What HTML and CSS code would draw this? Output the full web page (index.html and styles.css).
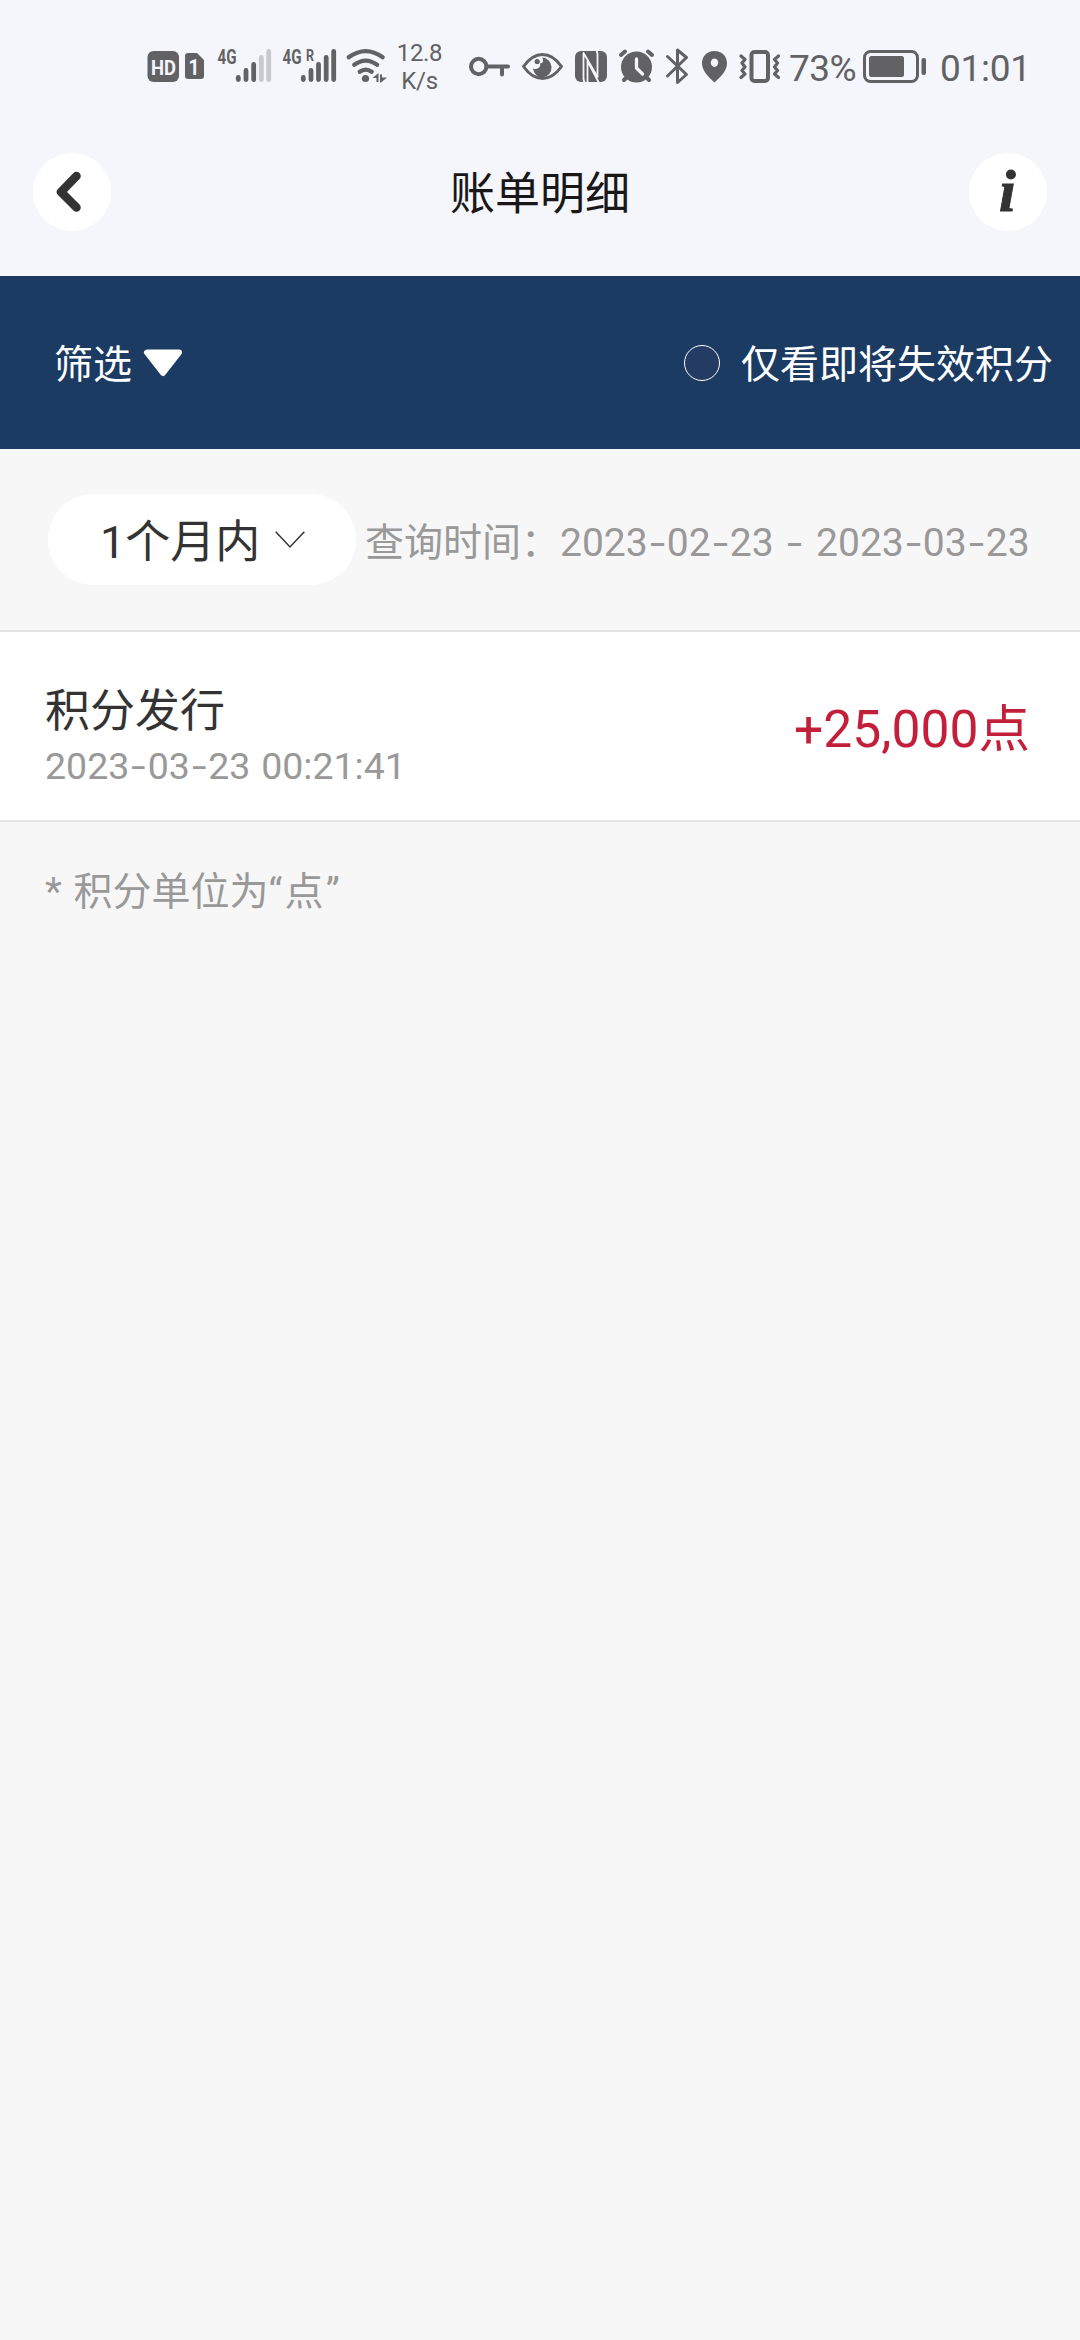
FILE: index.html
```html
<!DOCTYPE html>
<html lang="zh-CN">
<head>
<meta charset="utf-8">
<title>账单明细</title>
<link rel="stylesheet" href="styles.css">
</head>
<body>
<div class="status">
  <svg class="icon" width="66" height="48" viewBox="144 42 66 48">
    <rect x="147.5" y="51" width="31.5" height="31" rx="6"/>
    <text class="badge-text" x="151" y="74.5" font-size="21" textLength="25" lengthAdjust="spacingAndGlyphs">HD</text>
    <path d="M188 53h9l7 7v16q0 3-3 3h-13q-3 0-3-3V56q0-3 3-3z"/>
    <text class="badge-text" x="188.5" y="75" font-size="22" textLength="11" lengthAdjust="spacingAndGlyphs">1</text>
  </svg>
  <svg class="icon" width="66" height="48" viewBox="210 42 66 48">
    <text class="net" x="217.500" y="64" textLength="19" lengthAdjust="spacingAndGlyphs">4G</text>
    <g class="bars"><path d="M238.300 77.500v2M246 70.500v9M253.700 64.500v15"/><path class="faint" d="M261.300 57.500v22M268.700 51.500v28"/></g>
  </svg>
  <svg class="icon" width="66" height="48" viewBox="276 42 66 48">
    <text class="net" x="282.500" y="64" textLength="19" lengthAdjust="spacingAndGlyphs">4G</text>
    <text class="net net-r" x="306" y="61" textLength="8" lengthAdjust="spacingAndGlyphs">R</text>
    <g class="bars"><path d="M303.300 77.500v2M311 70.500v9M318.500 64.500v15M326.200 57.500v22M333.700 51.500v28"/></g>
  </svg>
  <svg class="icon" width="50" height="48" viewBox="342 42 50 48">
    <g class="line" stroke-width="4.200"><path d="M348.700 57.300q17-12.500 34 0M354.200 64.800q11.500-8.500 23 0M359.700 71.800q6-4.500 12 0"/></g>
    <circle cx="365.500" cy="78.500" r="3.600"/>
    <path d="M372.500 78l6-5v9h-2v-4zM380 74.500h2v3h5l-6 5h-1z"/>
  </svg>
  <div class="speed"><span>12.8</span><span>K/s</span></div>
  <svg class="icon" width="56" height="48" viewBox="460 42 56 48">
    <g class="line" stroke-width="4"><circle cx="478.700" cy="66.500" r="7.700"/><path d="M487 66.500h21M502 67v7.500"/></g>
  </svg>
  <svg class="icon" width="53" height="48" viewBox="516 42 53 48">
    <path class="line" stroke-width="3" d="M523.500 66.500Q532 54.500 542.500 54.500T561.500 66.500Q553 78.500 542.500 78.500T523.500 66.500z"/>
    <path d="M542 57.500a9.300 10 0 1 1-9 11q3 1.500 6-1q2-2 1-4q3 0 3-3q0-2-1-3z"/><circle cx="537.200" cy="61.500" r="2.600"/>
  </svg>
  <svg class="icon" width="44" height="48" viewBox="569 42 44 48">
    <rect x="575" y="51" width="32" height="31" rx="6"/>
    <path class="cut" stroke-width="1.800" d="M584.500 83l-1-4V53l14 24V61M587.500 83V61l11 21M597.500 62V54l-1-4"/>
  </svg>
  <svg class="icon" width="46" height="48" viewBox="613 42 46 48">
    <circle cx="636.500" cy="67" r="15.500"/>
    <g class="line" stroke-width="4"><path d="M621 55l4-3.500M652 55l-4-3.500M624 80l3-3M649 80l-3-3"/></g>
    <path class="cut" stroke-width="3.300" d="M636.500 59v9l6 6"/>
  </svg>
  <svg class="icon" width="36" height="48" viewBox="659 42 36 48">
    <path class="line" stroke-width="3" d="M667.500 56.500l19 18-9 8V50l9 7.500-19 18.500"/>
  </svg>
  <svg class="icon" width="38" height="48" viewBox="695 42 38 48">
    <path fill-rule="evenodd" d="M714.500 51c7.500 0 12.500 5 12.500 12.500 0 7-6 13-12.500 19-6.500-6-12.500-12-12.500-19C702 56 707 51 714.500 51zm0 7.500a3.700 4.200 0 1 0 .01 0z"/>
  </svg>
  <svg class="icon" width="53" height="48" viewBox="733 42 53 48">
    <rect class="line" stroke-width="4" x="751.500" y="52" width="16.500" height="29" rx="3"/>
    <path class="line" stroke-width="3.200" d="M741 56l4 3.500-3 3.500 3 4-3 3.500 3 3.500-4 3.500M778.500 56l-4 3.500 3 3.500-3 4 3 3.500-3 3.500 4 3.500"/>
  </svg>
  <span class="percent">73%</span>
  <svg class="icon" width="78" height="48" viewBox="858 42 78 48">
    <rect class="line" stroke-width="3" x="864.500" y="51.500" width="53" height="30" rx="6"/>
    <rect x="869" y="56" width="35" height="21" rx="2.500"/><rect x="921.500" y="58" width="4.500" height="17" rx="2"/>
  </svg>
  <span class="clock">01:01</span>
</div>
<header class="header">
  <button class="round" aria-label="返回"><svg width="78" height="78" viewBox="0 0 78 78"><path class="back" d="M43.500 23L28 39l15.500 15.500"/></svg></button>
  <h1 class="title">账单明细</h1>
  <button class="round" aria-label="说明"><svg width="78" height="78" viewBox="0 0 78 78"><text class="info" x="30" y="58">i</text></svg></button>
</header>
<div class="filter">
  <div class="filter-left"><span class="filter-text">筛选</span><svg width="40" height="28" viewBox="0 0 40 28"><path class="triangle" d="M4 3.500h32L20 24z"/></svg></div>
  <label class="filter-right"><span class="radio"></span><span class="filter-text">仅看即将失效积分</span></label>
</div>
<div class="query">
  <div class="range"><span class="range-text">1个月内</span><svg width="30" height="18" viewBox="0 0 30 18"><path class="chevron" d="M.7.700L15 16 29.300.700"/></svg></div>
  <div class="period">查询时间：<span class="dates">2023<i>-</i>02<i>-</i>23 <i>-</i> 2023<i>-</i>03<i>-</i>23</span></div>
</div>
<div class="record">
  <div class="record-main"><div class="name">积分发行</div><div class="time">2023<i>-</i>03<i>-</i>23 00:21:41</div></div>
  <div class="amount">+25,000点</div>
</div>
<p class="note">* 积分单位为<span class="quoted">“点”</span></p>
</body>
</html>
```
FILE: styles.css
```css
* { box-sizing: border-box; }
body {
  margin: 0;
  width: 1080px;
  min-height: 2340px;
  background: #f7f7f7;
  color: #333;
  font-family: Roboto, "Noto Sans CJK SC", sans-serif;
  font-size: 39px;
  line-height: 1;
  white-space: nowrap;
}
i { font-style: normal; display: inline-block; width: .49em; text-align: center; transform: scaleX(1.4); }

.status { display: flex; height: 132px; padding: 42px 0 0 144px; background: #f4f6fb; color: #626264; }
.icon { flex: none; fill: #626264; }
.line { fill: none; stroke: #626264; stroke-linecap: round; stroke-linejoin: round; }
.cut { fill: none; stroke: #f4f6fb; stroke-linejoin: round; stroke-linecap: round; }
.badge-text { fill: #f4f6fb; font-weight: 700; }
.net { font-size: 20px; font-weight: 700; }
.net-r { font-size: 16px; }
.bars { fill: none; stroke: #626264; stroke-width: 4.8px; stroke-linecap: round; }
.faint { stroke: #c8c9cd; }
.speed { width: 68px; padding-right: 13px; display: flex; flex-direction: column; align-items: center; font-size: 24px; line-height: 28px; margin-top: -3px; letter-spacing: -.3px; }
.percent { width: 72px; padding-left: 3px; font-size: 37px; line-height: 54px; letter-spacing: -.5px; }
.clock { padding-left: 4px; font-size: 37px; line-height: 54px; letter-spacing: -.3px; }

.header { display: flex; justify-content: space-between; height: 144px; padding: 21px 33px 0; background: #f4f6fb; }
.round { width: 78px; height: 78px; padding: 0; border: 0; border-radius: 50%; background: #fff; }
.round svg { display: block; }
.back { fill: none; stroke: #333; stroke-width: 8.500px; stroke-linecap: round; stroke-linejoin: round; }
.info { fill: #333; stroke: #333; stroke-width: 1px; font: italic 700 60px "Liberation Serif", serif; }
.title { margin: 0; font-size: 45px; font-weight: 400; line-height: 84px; color: #1a1718; }

.filter { display: flex; align-items: center; justify-content: space-between; height: 173px; padding: 0 27px 0 54px; background: #1b3b63; color: #fff; }
.filter-left, .filter-right { display: flex; align-items: center; }
.filter-left svg { margin-left: 11px; }
.filter-text { padding-top: 6px; }
.triangle { fill: #fff; stroke: #fff; stroke-width: 6px; stroke-linejoin: round; }
.radio { width: 36px; height: 36px; margin-right: 21px; border: 1.500px solid #fff; border-radius: 50%; background: #243c63; }

.query { display: flex; align-items: center; height: 183px; padding: 0 50px 0 48px; border-bottom: 2px solid #e5e5e5; }
.range { display: flex; align-items: center; width: 308px; height: 91px; padding-left: 52px; border-radius: 46px; background: #fff; font-size: 45px; }
.range-text { padding-top: 6px; }
.range svg { margin-left: 15px; }
.chevron { fill: none; stroke: #333; stroke-width: 1.500px; }
.period { display: flex; margin-left: 9px; padding-top: 8px; color: #999; }
.dates { word-spacing: 2px; }

.record { display: flex; align-items: center; justify-content: space-between; height: 190px; padding: 0 50px 0 45px; background: #fff; border-bottom: 2px solid #e5e5e5; }
.record-main { padding-top: 19px; }
.name { font-size: 45px; line-height: 60px; }
.time { font-size: 37.500px; line-height: 48px; color: #999; word-spacing: 1.500px; }
.amount { padding-top: 8px; font-size: 51.600px; color: #c41f3a; }
.note { margin: 0; padding: 48px 45px; line-height: 44px; color: #999; word-spacing: 2px; }
.quoted { letter-spacing: 2.300px; }
```
